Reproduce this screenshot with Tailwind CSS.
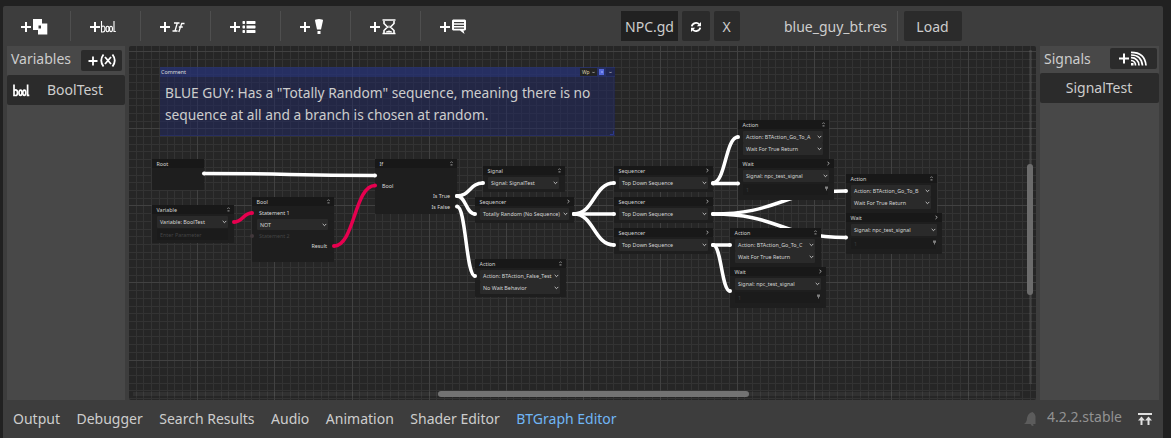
<!DOCTYPE html>
<html lang="en">
<head>
<meta charset="utf-8">
<title>BTGraph Editor</title>
<script src="https://cdn.jsdelivr.net/npm/@tailwindcss/browser@4"></script>
</head>
<body class="w-[1171px] h-[438px] overflow-hidden bg-[#212121] pt-1.5 pl-[3px] pr-2 text-[14px] leading-[20px] text-[#cdcdcd] font-['Noto_Sans',sans-serif]">
<div class="h-[432px] bg-[#3d3d3d] rounded-t-[2px] flex flex-col px-1">
  <!-- toolbar -->
  <div class="h-10 flex items-center shrink-0 text-white pt-[2px]">
    <div class="w-[63px] h-[30px] mb-0.5 flex items-center justify-center pr-[10px] pt-[2px] shrink-0"><svg width="28" height="18" viewBox="0 0 28 18" fill="currentColor"><path d="M1 8h4V4h2v4h4v2H7v4H5v-4H1z"/><path fill-rule="evenodd" d="M13 1h9v4.500h5.300V16.500H18V12h-5zM18.500 7.500v3H21v-3z"/></svg></div>
    <div class="w-[70px] h-[30px] mb-0.5 border-l border-[#4f4f4f] flex items-center justify-center pr-[5px] pt-[2px] shrink-0"><svg width="28" height="18" viewBox="0 0 28 18" fill="none" stroke="currentColor" stroke-width="1.100"><path stroke-width="2" d="M1 9h10M6 4v10"/><path d="M12.500 3v11h1.500q2 0 2-3t-2-3q-1 0-1.500 1.500"/><ellipse cx="18.500" cy="11" rx="1.500" ry="2.700"/><ellipse cx="22" cy="11" rx="1.500" ry="2.700"/><path d="M25 3v10.500h1.800"/></svg></div>
    <div class="w-[70px] h-[30px] mb-0.5 border-l border-[#4f4f4f] flex items-center justify-center pr-[5px] pt-[2px] shrink-0"><svg width="28" height="18" viewBox="0 0 28 18" fill="none" stroke="currentColor" stroke-width="1.300"><path stroke-width="2" d="M1 9h10M6 4v10"/><path d="M15 5h5.500M18.300 5L16 13M13.500 13h5M25.500 5.500h-2.800L19.800 14M19.800 9h4"/></svg></div>
    <div class="w-[70px] h-[30px] mb-0.5 border-l border-[#4f4f4f] flex items-center justify-center pr-[5px] pt-[2px] shrink-0"><svg width="28" height="18" viewBox="0 0 28 18" fill="currentColor"><path d="M1 8h4V4h2v4h4v2H7v4H5v-4H1zM14 3h1.500l.5.500v2l-.5.500H14l-.5-.5v-2zM17.500 3H26l.5.500v2l-.5.500h-8.500zM14 7.500h1.500l.5.500v2l-.5.500H14l-.5-.5V8zM17.500 7.500H26l.5.500v2l-.5.500h-8.500zM14 12h1.500l.5.500v2l-.5.500H14l-.5-.5v-2zM17.500 12H26l.5.500v2l-.5.500h-8.500z"/></svg></div>
    <div class="w-[70px] h-[30px] mb-0.5 border-l border-[#4f4f4f] flex items-center justify-center pr-[5px] pt-[2px] shrink-0"><svg width="28" height="18" viewBox="0 0 28 18" fill="currentColor"><path d="M1 8h4V4h2v4h4v2H7v4H5v-4H1zM16 2.500q0-1.500 4-1.500T24 2.500L22 11.500h-4zM18.500 13h3v3h-3z"/></svg></div>
    <div class="w-[70px] h-[30px] mb-0.5 border-l border-[#4f4f4f] flex items-center justify-center pr-[5px] pt-[2px] shrink-0"><svg width="28" height="18" viewBox="0 0 28 18" fill="none" stroke="currentColor"><path stroke-width="2" d="M1 9h10M6 4v10"/><path stroke-width="1.600" d="M13.500 2h13M13.500 15.500h13M15 3v2.500l3.500 3.500L15 12.500V15M25 3v2.500L21.500 9l3.500 3.500V15"/><path fill="currentColor" stroke="none" d="M19.500 7.500h1v2.500h-1zM17 13.500l3-1 3 1v1h-6z"/></svg></div>
    <div class="w-[70px] h-[30px] mb-0.5 border-l border-[#4f4f4f] flex items-center justify-center pr-[5px] pt-[2px] shrink-0"><svg width="28" height="18" viewBox="0 0 28 18" fill="currentColor"><path d="M1 8h4V4h2v4h4v2H7v4H5v-4H1z"/><path fill-rule="evenodd" d="M14 1.500h12l1 1v9l-1 1h-1.500l1 3.500-4.500-3.500h-7l-1-1v-9zM15 4v1.300h10V4zM15 6.700V8h10V6.700zM15 9.400v1.300h10V9.400z"/></svg></div>
    <div class="ml-[131px] w-[57px] h-[30px] mb-0.5 bg-[#212121] flex items-center justify-center pt-[2px] text-[#cdcdcd]">NPC.gd</div>
    <div class="ml-1 w-7 h-[30px] mb-0.5 bg-[#2b2b2b] rounded-[2px] flex items-center justify-center pt-px"><svg width="12" height="12" viewBox="0 0 12 12" fill="none" stroke="currentColor" stroke-width="1.800"><path d="M1.800 5.300a4.200 4 0 0 1 7.500-1.800M10.200 6.700a4.200 4 0 0 1-7.500 1.800"/><path fill="currentColor" stroke="none" d="M11 1v4.300H6.800zM1 11V6.700h4.200z"/></svg></div>
    <div class="ml-1 w-[26px] h-[30px] mb-0.5 bg-[#2b2b2b] rounded-[2px] flex items-center justify-center pt-[2px] pr-px text-[#cdcdcd]">X</div>
    <div class="ml-[44px] w-[104px] text-[#cdcdcd] flex justify-center pr-px">blue_guy_bt.res</div>
    <div class="ml-[9px] w-px h-[30px] mb-0.5 bg-[#4f4f4f]"></div>
    <div class="ml-1.5 w-[58px] h-[30px] mb-0.5 bg-[#2b2b2b] rounded-[2px] flex items-center justify-center pt-[2px] pr-px text-[#cdcdcd]">Load</div>
  </div>

  <div class="h-[354px] flex gap-1 shrink-0">
    <!-- variables -->
    <div class="w-[118px] bg-[#484848] shrink-0">
      <div class="h-[29px] flex items-center justify-between pl-1 pr-[3px] pb-0.5"><span class="mb-0.5">Variables</span>
        <div class="w-[41px] h-[21px] mt-0.5 bg-[#2b2b2b] rounded-[2px] flex items-center justify-center text-white"><svg width="29" height="16" viewBox="0 0 29 16" fill="none" stroke="currentColor" stroke-width="1.800"><path d="M1.500 8h9M6 3.500v9M16.500 1.500q-4.500 6 0 12M25.500 1.500q4.500 6 0 12M18 4l6 7M24 4l-6 7"/></svg></div>
      </div>
      <div class="h-[30px] bg-[#2b2b2b] rounded-[2px] flex items-center pl-[5px]">
        <svg width="18" height="16" viewBox="0 0 18 16" fill="none" stroke="#fff" stroke-width="1.700"><path d="M2 2.500v11h1.500q2 0 2-2.800t-2-2.800q-1 0-1.500 1.300"/><ellipse cx="8.500" cy="10.700" rx="1.500" ry="2.600"/><ellipse cx="12.300" cy="10.700" rx="1.500" ry="2.600"/><path d="M15.600 2.500v10.800h1.700"/></svg>
        <span class="ml-[17px]">BoolTest</span>
      </div>
    </div>
    <!-- graph -->
    <div id="graph" class="relative w-[907px] h-[354px] bg-[#262626] overflow-hidden rounded-[2px] shrink-0 text-[5.39px] leading-[8px] whitespace-nowrap">
      <svg id="grid" class="absolute inset-0" width="907" height="354" viewBox="129 46 907 354" shape-rendering="crispEdges"></svg>
      <div class="absolute left-[31px] top-[21px] w-[455px] h-[69px] bg-[#202764]/50 border-[#262d60] border-b">
        <div class="h-[10px] bg-[#2b3a86]/45 flex items-center pl-px">
          <span class="text-[#dcdcdc]">Comment</span>
          <div class="ml-auto flex items-center gap-[2px]">
            <div class="w-[17px] h-[8px] bg-[#232323] flex items-center justify-between px-[2px]"><span class="text-[5px] text-[#d8d0b0]">Wp</span><svg width="3" height="3" viewBox="0 0 3 3" fill="none" stroke="#ccc" stroke-width=".7"><path d="M.3.800l1.200 1.200L2.700.800"/></svg></div>
            <div class="w-[5px] h-[6px] bg-[#5468dc] flex items-center justify-center"><div class="size-[2px] bg-[#7d90ee]"></div></div>
            <div class="w-[9px] h-[8px] flex items-center justify-center bg-[#202650]"><svg width="3" height="3" viewBox="0 0 3 3" fill="none" stroke="#ccc" stroke-width=".7"><path d="M.3.800l1.200 1.200L2.700.800"/></svg></div>
          </div>
        </div>
        <p class="pl-[5px] pt-[5px] text-[13.78px] leading-[22px]">BLUE GUY: Has a "Totally Random" sequence, meaning there is no<br>sequence at all and a branch is chosen at random.</p>
        <svg class="absolute right-[1px] bottom-0" width="4" height="4" viewBox="0 0 4 4" fill="none" stroke="#2c388c"><path d="M3.500 0v3.500H0"/></svg>
      </div>
      <svg id="wires" class="absolute inset-0" width="907" height="354" viewBox="129 46 907 354" fill="none" stroke-width="3.500"></svg>
      <div id="nodes"></div>
      <svg id="ports" class="absolute inset-0" width="907" height="354" viewBox="129 46 907 354"></svg>
      <div class="absolute left-[900px] top-[4px] w-[3px] h-[334px] bg-white/8"></div>
      <div class="absolute left-[898px] top-[118px] w-[6px] h-[131px] bg-[#6c6c6c] rounded-full"></div>
      <div class="absolute left-[4px] top-[346px] w-[887px] h-[4px] bg-white/5"></div>
      <div class="absolute left-[309px] top-[345px] w-[311px] h-[6px] bg-[#737373] rounded-full"></div>
    </div>
    <!-- signals -->
    <div class="w-[119px] bg-[#484848] shrink-0">
      <div class="h-[27px] flex items-center justify-between pl-1 pr-[2px]"><span class="mb-0.5">Signals</span>
        <div class="w-[47px] h-[21px] mb-0.5 bg-[#2b2b2b] rounded-[2px] flex items-center justify-center pr-[3px] text-white"><svg width="29" height="16" viewBox="0 0 29 16" fill="none" stroke="currentColor" stroke-width="1.700"><path stroke-width="2" d="M1 7.500h10M6 2.500v10"/><path d="M13 9.500a4.500 4.500 0 0 1 4.500 5M13 6.700a7.500 7.500 0 0 1 8 7.800M13 4q10.500 0 11.500 10.500M13 1.300q14 0 15 13.200"/><path stroke="none" fill="currentColor" d="M13 12h2.500v2.500H13z"/></svg></div>
      </div>
      <div class="h-[30px] bg-[#2b2b2b] rounded-[2px] flex items-center justify-center pr-px">SignalTest</div>
    </div>
  </div>

  <!-- bottom bar -->
  <div class="h-[38px] flex items-center pl-1.5 gap-[16.500px] shrink-0 pr-[7px]">
    <span>Output</span><span>Debugger</span><span>Search Results</span><span>Audio</span><span>Animation</span><span>Shader Editor</span><span class="text-[#70b6f5]">BTGraph Editor</span>
    <div class="ml-auto flex items-center">
      <svg width="14" height="16" viewBox="0 0 14 16" fill="#5c5c5c"><path d="M9.500 1q3.500 2 3 6.500V13H10l.8 1.500-1.800.5-1.500-2H1q3-2 3-6Q5 2 9.500 1z"/></svg>
      <span class="ml-[10px] mb-1 text-[#929292]">4.2.2.stable</span>
      <svg class="ml-4" width="14" height="14" viewBox="0 0 14 14" fill="#e0e0e0"><path d="M0 1h14v2H0zM3.500 4.500L7 8.500H4.500V13h-2V8.500H0zM10.500 4.500L14 8.500h-2.500V13h-2V8.500H7z"/></svg>
    </div>
  </div>
</div>

<script>
const OX = 129, OY = 46;
// grid
let g = '';
const STEP = 7.705;
for (let k = -9; k <= 110; k++) {
  const x = Math.floor(197.9 + k * STEP), y = Math.floor(51.8 + k * STEP);
  const f = k % 10 === 0 ? '#414141' : '#333333';
  if (k % 10) {
    g = `<rect x="${x}" y="46" width="1" height="354" fill="${f}"/><rect x="129" y="${y}" width="907" height="1" fill="${f}"/>` + g;
  } else {
    g += `<rect x="${x}" y="46" width="1" height="354" fill="${f}"/><rect x="129" y="${y}" width="907" height="1" fill="${f}"/>`;
  }
}
document.getElementById('grid').innerHTML = g;

// nodes: x, y, w, h, title, corner mark, rows [kind, text, top, height, right inset]
const nodes = [
  [152,159,52,31,'Root','',[]],
  [152,205,82,38,'Variable','c',[['d','Variable: BoolTest',11,12,6],['f','Enter Parameter',24,11,6]]],
  [252,197,82,65,'Bool','c',[['t','Statement 1',12,8,6],['d','NOT',22,11,6],['m','Statement 2',35,8,6],['r','Result',45,8,7]]],
  [375,159,82,55,'If','c',[['t','Bool',23,8,6],['r','Is True',33,8,7],['r','Is False',44,8,7]]],
  [483,166,82,26,'Signal','c',[['d','Signal: SignalTest',11,12,6]]],
  [475,197,99,26,'Sequencer','o',[['d','Totally Random (No Sequence)',11,12,5]]],
  [475,259,91,38,'Action','c',[['d','Action: BTAction_False_Test',11,12,6],['d','No Wait Behavior',23,12,6]]],
  [614,166,99,26,'Sequencer','o',[['d','Top Down Sequence',11,12,5]]],
  [614,197,99,26,'Sequencer','o',[['d','Top Down Sequence',11,12,5]]],
  [614,228,99,26,'Sequencer','o',[['d','Top Down Sequence',11,12,5]]],
  [738,120,91,40,'Action','c',[['d','Action: BTAction_Go_To_A',11,12,6],['d','Wait For True Return',23,12,6]]],
  [738,159,96,41,'Wait','o',[['d','Signal: npc_test_signal',11,12,5],['s','1',25,11,6]]],
  [730,228,91,40,'Action','c',[['d','Action: BTAction_Go_To_C',11,12,6],['d','Wait For True Return',23,12,6]]],
  [730,267,96,41,'Wait','o',[['d','Signal: npc_test_signal',11,12,5],['s','1',25,11,6]]],
  [846,174,91,40,'Action','c',[['d','Action: BTAction_Go_To_B',11,12,6],['d','Wait For True Return',23,12,6]]],
  [846,213,96,41,'Wait','o',[['d','Signal: npc_test_signal',11,12,5],['s','1',25,11,6]]]
];
const kinds = {
  d: 'absolute left-[5px] bg-[#2a2a2a] rounded-[1px] flex items-center justify-between pl-[3px] pr-[1px] text-[#d4d4d4]',
  f: 'absolute left-[5px] bg-[#1b1b1b] flex items-center pl-[3px] text-[#444444]',
  s: 'absolute left-[5px] bg-[#1b1b1b] flex items-center justify-between pl-[3px] pr-0 text-[#3e3e3e]',
  t: 'absolute left-[7px] flex items-center text-[#dadada]',
  m: 'absolute left-[7px] flex items-center text-[#444444]',
  r: 'absolute left-[5px] flex items-center justify-end text-[#dadada]'
};
const chev = '<svg width="5" height="4" viewBox="0 0 5 4" fill="none" stroke="#cfcfcf" stroke-width=".9"><path d="M.7.900l1.800 1.800L4.300.900"/></svg>';
const spin = '<svg class="mb-[2px]" width="3" height="5" viewBox="0 0 3 5" fill="#808080"><path d="M0 .5h3v2.300H2V4.500H1V2.800H0z"/></svg>';
const marks = {
  '': '',
  c: '<svg width="3" height="5" viewBox="0 0 3 5" fill="none" stroke="#c0c0c0" stroke-width=".8"><path d="M.5 1.700l1-1 1 1M.500 3.900h2"/></svg>',
  o: '<svg width="3" height="5" viewBox="0 0 3 5" fill="none" stroke="#c8c8c8" stroke-width=".8"><path d="M.500.700l1.700 1.700L.500 4"/></svg>'
};
document.getElementById('nodes').innerHTML = nodes.map(([x, y, w, h, t, m, rows]) =>
  `<div class="absolute bg-[#1e1e1e] rounded-[1px]" style="left:${x - OX}px;top:${y - OY}px;width:${w}px;height:${h}px">
    <div class="h-[9px] bg-[#181818] flex items-center justify-between pl-[4.500px] pr-[4.500px] text-[#d4d4d4]"><span>${t}</span>${marks[m]}</div>` +
  rows.map(([k, s, top, rh, ri]) => `<div class="${kinds[k]}" style="top:${top}px;height:${rh}px;right:${ri}px"><span>${s}</span>${k === 'd' ? chev : k === 's' ? spin : ''}</div>`).join('') +
  '</div>').join('');

// connections
const W = '#ffffff', R = '#e6004f';
const edges = [
  [204,173.5,375,175.5,W],[234,222,252,213,R],[334,246,375,185.5,R],
  [457,196,483,183,W],[457,196,475,214,W],[457,206.5,475,276,W],
  [574,214,614,183,W],[574,214,614,214,W],[574,214,614,245,W],
  [713,183,738,137,W],[713,183.5,738,183.5,W],
  [713,214,846,191,W],[713,214,846,237.500,W],
  [713,245,730,245,W],[713,245,730,291,W]
];
document.getElementById('wires').innerHTML = edges.map(([a, b, c, d, s]) => {
  const m = (c - a) / 2;
  return `<path stroke="${s}" d="M${a} ${b}C${a + m} ${b} ${c - m} ${d} ${c} ${d}"/>`;
}).join('');
document.getElementById('ports').innerHTML = edges.map(([a, b, c, d, s]) =>
  `<circle cx="${a}" cy="${b}" r="2" fill="${s}"/><circle cx="${c}" cy="${d}" r="2" fill="${s}"/>`).join('') +
  '<circle cx="252" cy="236" r="2" fill="#41383b"/>';
</script>
</body>
</html>
